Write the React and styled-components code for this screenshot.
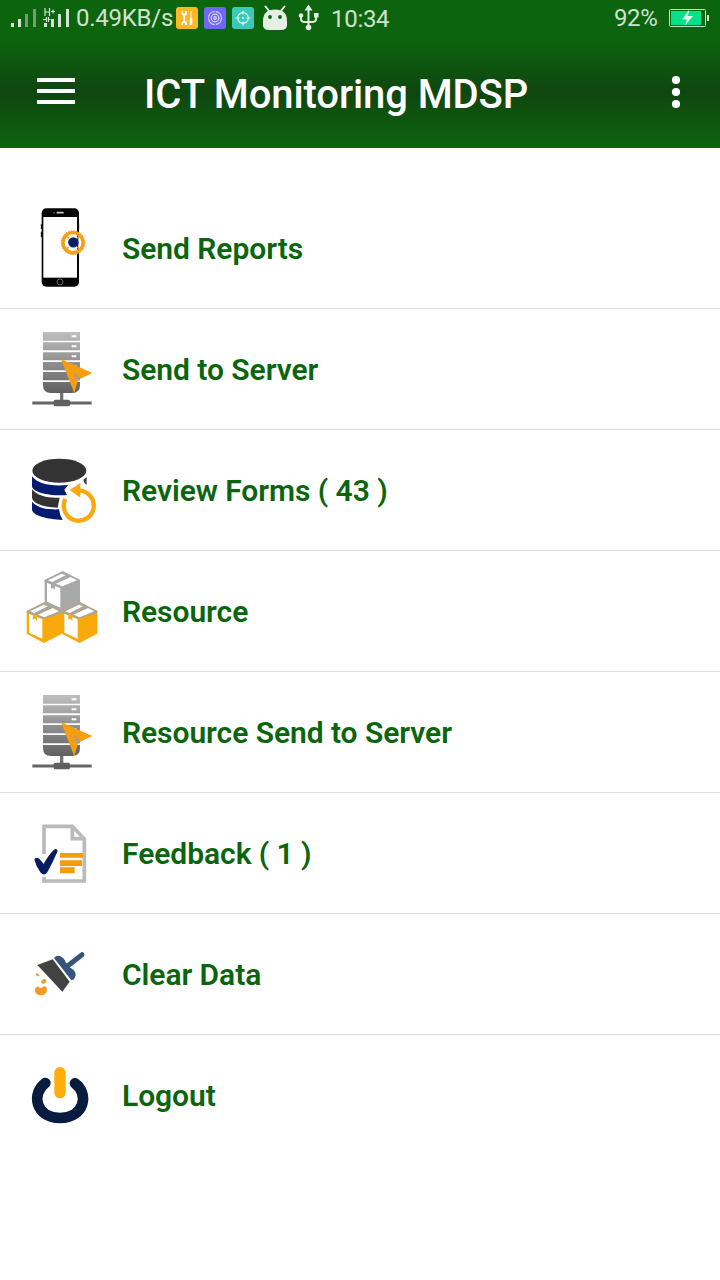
import React from 'react';
import styled, { createGlobalStyle } from 'styled-components';

const GlobalStyle = createGlobalStyle`
  * { box-sizing: border-box; }
  body { margin: 0; background: #fff; font-family: Roboto, sans-serif; }
`;

const Screen = styled.div`
  width: 720px;
  height: 1280px;
  background: #fff;
  overflow: hidden;
`;

const StatusBar = styled.div`
  height: 36px;
  padding: 0 10px;
  display: flex;
  align-items: center;
  background: #0c650e;
  color: #cfe2cf;
`;

const StatusText = styled.span`
  flex: none;
  width: ${(p) => p.$w}px;
  margin-left: ${(p) => p.$left || 0}px;
  padding-top: ${(p) => p.$drop || 0}px;
  font-size: 24px;
  line-height: 36px;
  height: 36px;
  letter-spacing: ${(p) => p.$track || 0}px;
  white-space: nowrap;
`;

const StatusIcon = styled.svg`
  display: block;
  flex: none;
  height: 36px;
  width: ${(p) => p.$w}px;
`;

const StatusGroup = styled.div`
  display: flex;
  align-items: center;
  gap: ${(p) => p.$gap || 0}px;
  margin-left: ${(p) => (p.$end ? 'auto' : 0)};
`;

const Header = styled.header`
  height: 112px;
  padding: 0 37px;
  display: flex;
  align-items: center;
  background: linear-gradient(#0c650e, #0f4610 50%, #0c650e);
  color: #fff;
`;

const Title = styled.h1`
  flex: 1;
  margin: 6px 0 0 69px;
  font-size: 40px;
  font-weight: 500;
  line-height: 48px;
  letter-spacing: -0.1px;
  white-space: nowrap;
`;

const IconButton = styled.button`
  border: 0;
  padding: 0;
  background: none;
  height: 44px;
  width: ${(p) => p.$w}px;
  svg { display: block; }
`;

const Menu = styled.ul`
  list-style: none;
  margin: 0;
  padding: 40px 0 0;
`;

const MenuItem = styled.li`
  height: 121px;
  padding: 0 22px;
  display: flex;
  align-items: center;
  gap: 20px;
  border-bottom: 1px solid #dedede;
  &:last-child { border-bottom-color: transparent; }
`;

const MenuIcon = styled.svg`
  display: block;
  flex: none;
  width: 80px;
  height: 100px;
`;

const Label = styled.span`
  padding-top: 1px;
  color: #0b650d;
  font-size: 30px;
  font-weight: 600;
  line-height: 36px;
  letter-spacing: -0.05px;
  white-space: nowrap;
`;

const PhoneIcon = () => (
  <MenuIcon viewBox="6 9 240 300">
    <rect x="65" y="40" width="112" height="235" rx="14" fill="#050505" />
    <rect x="70" y="66" width="101" height="182" fill="#fff" />
    <path d="M64.500 88v14M64.500 110v16M175.500 86v18" stroke="#111" strokeWidth="4" />
    <path d="M112 53h17" stroke="#c5c5c5" strokeWidth="5" strokeLinecap="round" />
    <circle cx="102" cy="53" r="2" fill="#888" />
    <circle cx="120" cy="261" r="9" fill="none" stroke="#666" strokeWidth="3" />
    <circle cx="159" cy="143" r="28" fill="#fff" />
    <path d="M173 118v50" stroke="#222" strokeWidth="4" />
    <circle cx="159" cy="143" r="30" fill="none" stroke="#f5a11c" strokeWidth="10" />
    <circle cx="159" cy="143" r="35" fill="none" stroke="#f5a11c" strokeWidth="4" strokeDasharray="4.300 3.200" />
    <path d="M147 130l-8-8M172 130l8-8M146 156l-7 7M172 156l8 8" stroke="#f5a11c" strokeWidth="5" />
    <circle cx="160" cy="142" r="15.500" fill="#0b1f66" />
  </MenuIcon>
);

const ServerIcon = () => (
  <MenuIcon viewBox="6 -3 240 300">
    <defs>
      <linearGradient id="rack" x1="0" y1="36" x2="0" y2="220" gradientUnits="userSpaceOnUse">
        <stop offset="0" stopColor="#bfbfbf" />
        <stop offset="1" stopColor="#606060" />
      </linearGradient>
    </defs>
    <path
      fill="url(#rack)"
      d="M69 36h111v26H69zM69 67h111v24H69zM69 97h111v24H69zM69 126h111v25H69zM69 156h111v25H69zM69 186h111v10q0 23-24 23H93q-24 0-24-23z"
    />
    <path d="M155 49h14M155 79h14M155 109h14M155 139h14" stroke="#fff" strokeWidth="6" />
    <path d="M125 219v22" stroke="#727272" strokeWidth="10" />
    <path d="M37 249h178" stroke="#666" strokeWidth="9" />
    <rect x="101" y="239" width="49" height="20" rx="5" fill="#606060" />
    <path d="M123 117L217 159L181 176L162 159L173 183L163 220Z" fill="#f59e11" />
    <path d="M161 158l20 18-8 8z" fill="#a3a3a3" />
  </MenuIcon>
);

const DatabaseIcon = () => (
  <MenuIcon viewBox="6 -15 240 300">
    <ellipse cx="118" cy="77" rx="81" ry="36" fill="#333" />
    <path d="M36 94C55 119 94 124 145 120L133 134L141 150C98 154 36 144 36 123Z" fill="#041b70" />
    <path d="M36 133C55 154 85 160 119 158L113 188C70 187 36 175 36 157Z" fill="#333" />
    <path d="M36 170C55 191 86 194 117 193Q119 211 128 225C82 223 36 212 36 193Z" fill="#041b70" />
    <path d="M190 104l10-8v23q-8-3-10-15z" fill="#444" />
    <path d="M136 162A45 45 0 1 0 176 137" fill="none" stroke="#faa80c" strokeWidth="13" />
    <path d="M149 135L181 114V158Z" fill="#faa80c" />
  </MenuIcon>
);

const Crate = ({ x, y, side, top }) => (
  <g transform={`translate(${x} ${y})`}>
    <path d="M0 26L54 0L106 26V94L52 122L0 94Z" fill={side} />
    <path d="M0 31V26L54 0L106 26V31L52 49Z" fill={top} />
    <path d="M7 34L47 51V109L7 91Z" fill="#fff" />
    <path d="M10 27L51 7L63 12L23 32ZM34 37L78 17L97 27L53 45Z" fill="#fff" />
    <path d="M19 34L31 39V56L25 49L19 52Z" fill={side} />
  </g>
);

const CratesIcon = () => (
  <MenuIcon viewBox="21 3 240 300">
    <Crate x={89} y={34} side="#a8a8a8" top="#a8a8a8" />
    <Crate x={35} y={127} side="#f9a90b" top="#aaa59a" />
    <Crate x={141} y={127} side="#f9a90b" top="#aaa59a" />
  </MenuIcon>
);

const FeedbackIcon = () => (
  <MenuIcon viewBox="6 -21 240 300">
    <path d="M72 132V49H157L193 87V213H72V200" fill="none" stroke="#bababa" strokeWidth="11" />
    <path d="M157 50V86H192" fill="none" stroke="#bababa" strokeWidth="11" />
    <path d="M120 129h69v14h-69zM120 151h66v17h-66zM120 172h44v18h-44z" fill="#f49b10" />
    <path d="M43 148q4-9 15-2l13 16q14-27 31-43q8-5 11 4q-14 33-31 64q-10 13-21 0q-14-20-18-39z" fill="#071b63" />
  </MenuIcon>
);

const BrushIcon = () => (
  <MenuIcon viewBox="6 -33 240 300">
    <path d="M138 97L186 59" stroke="#36557b" strokeWidth="15" strokeLinecap="round" />
    <path d="M102 69Q108 61 120 63Q133 69 137 82L151 98Q164 104 167 116Q167 134 154 136Z" fill="#36557b" />
    <path d="M52 90L98 73L149 140L127 170Z" fill="#424242" />
    <path d="M47 115q9-2 11 8q-9 4-11-8zM64 138q8-10 15-4q-1 14-12 12q-5-3-3-8zM45 162q6-12 12-5q6 5 11-1q9-6 13 5q0 20-20 20q-17-1-16-19z" fill="#f39a24" />
  </MenuIcon>
);

const PowerIcon = () => (
  <MenuIcon viewBox="6 -15 240 300">
    <path d="M76 99C34 130 45 203 120 204C195 203 207 130 165 100" fill="none" stroke="#071c3e" strokeWidth="32" strokeLinecap="round" />
    <path d="M120 68V128" stroke="#ffad08" strokeWidth="34" strokeLinecap="round" />
  </MenuIcon>
);

const items = [
  { label: 'Send Reports', Icon: PhoneIcon },
  { label: 'Send to Server', Icon: ServerIcon },
  { label: 'Review Forms ( 43 )', Icon: DatabaseIcon },
  { label: 'Resource', Icon: CratesIcon },
  { label: 'Resource Send to Server', Icon: ServerIcon },
  { label: 'Feedback ( 1 )', Icon: FeedbackIcon },
  { label: 'Clear Data', Icon: BrushIcon },
  { label: 'Logout', Icon: PowerIcon },
];

const SignalIcons = () => (
  <StatusIcon $w={62} viewBox="10 0 62 36">
    <path d="M11 23h3v4h-3zM18 19h3v8h-3z" fill="#d5e5d5" />
    <path d="M25 14h3v13h-3zM33 9h3v18h-3z" fill="#6da26e" />
    <path d="M44 23h3v4h-3zM51 19h3v8h-3zM58 14h3v13h-3zM66 9h3v18h-3z" fill="#d5e5d5" />
    <path d="M45 8v8M49.500 8v8M45 12h4.500M51 11.500h4M53 9.500v4M43 19.500h3.500M46.500 17v5M48.500 17v5M48.500 19.500h2" stroke="#d5e5d5" strokeWidth="1.200" />
  </StatusIcon>
);

const AppIcons = () => (
  <StatusIcon $w={146} viewBox="175 0 146 36">
    <rect x="176" y="7" width="22" height="22" rx="3" fill="#ffb820" />
    <path d="M181.500 11v3l2 2v5l-2 1v3h1.500v-2h2v2h2v-3l-2-1v-5l2-2v-3h-2v2.500h-2V11z" fill="#fff" />
    <path d="M191 11v7" stroke="#ffe3a3" strokeWidth="1.500" />
    <path d="M191 18v7" stroke="#fff" strokeWidth="2.500" />
    <rect x="204" y="7" width="22" height="22" rx="3" fill="#7166f9" />
    <g fill="none" stroke="#dedbff" strokeWidth="1.200">
      <circle cx="215" cy="18" r="6.500" strokeDasharray="9 1.200" />
      <circle cx="215" cy="18" r="3.800" />
      <circle cx="215" cy="18" r="1.300" />
    </g>
    <rect x="232" y="7" width="22" height="22" rx="3" fill="#3bcab7" />
    <g fill="none" stroke="#ddf8f3" strokeWidth="1.200">
      <circle cx="243" cy="18" r="5.300" />
      <path d="M243 10.500v4M243 21.500v4M235.500 18h4M246.500 18h4" />
    </g>
    <circle cx="243" cy="18" r="1" fill="#fff" />
    <path d="M265.500 6.500l4 5M284.500 6.500l-4 5" stroke="#e5efe5" strokeWidth="2" strokeLinecap="round" />
    <path d="M263 21q0-11.500 12-11.500t12 11.500v4q0 5-6 5h-12q-6 0-6-5z" fill="#e5efe5" />
    <circle cx="270" cy="17" r="1.900" fill="#0c650e" />
    <circle cx="280" cy="17" r="1.900" fill="#0c650e" />
    <path d="M308.500 9v18M301 16v3q0 3 4 3h7q4 0 4-3v-4" fill="none" stroke="#e5efe5" strokeWidth="2" />
    <path d="M308.500 4.500l4 6h-8z" fill="#e5efe5" />
    <circle cx="301" cy="15.500" r="2.300" fill="#e5efe5" />
    <rect x="314" y="13" width="4.500" height="4.500" fill="#e5efe5" />
    <circle cx="308.500" cy="27.500" r="2.800" fill="#e5efe5" />
  </StatusIcon>
);

const BatteryIcon = () => (
  <StatusIcon $w={41} viewBox="669 0 41 36">
    <rect x="669.500" y="9.500" width="36" height="17" rx="1" fill="none" stroke="#b5e6bd" />
    <rect x="671" y="11" width="30" height="14" fill="#00e18a" />
    <path d="M707 15h2v6h-2z" fill="#d5e5d5" />
    <path d="M688.500 10.500L682 19.500h5l-2 6 8-9.500h-5.500l2-5z" fill="#e3f7e9" />
  </StatusIcon>
);

export default function App() {
  return (
    <Screen>
      <GlobalStyle />
      <StatusBar>
        <StatusGroup>
          <SignalIcons />
          <StatusText $w={99} $left={4} $track={-0.25}>0.49KB/s</StatusText>
          <AppIcons />
          <StatusText $w={60} $left={10} $drop={1} $track={-0.3}>10:34</StatusText>
        </StatusGroup>
        <StatusGroup $end $gap={12}>
          <StatusText $w={43} $track={-0.4}>92%</StatusText>
          <BatteryIcon />
        </StatusGroup>
      </StatusBar>
      <Header>
        <IconButton $w={38} aria-label="Menu">
          <svg width="38" height="44" viewBox="0 0 38 44">
            <path d="M0 8h38v4H0zM0 19h38v4H0zM0 30h38v4H0z" fill="#fff" />
          </svg>
        </IconButton>
        <Title>ICT Monitoring MDSP</Title>
        <IconButton $w={14} aria-label="More options">
          <svg width="14" height="44" viewBox="0 0 14 44">
            <g fill="#fff">
              <circle cx="7" cy="10" r="4.100" />
              <circle cx="7" cy="22" r="4.100" />
              <circle cx="7" cy="34" r="4.100" />
            </g>
          </svg>
        </IconButton>
      </Header>
      <Menu>
        {items.map(({ label, Icon }) => (
          <MenuItem key={label}>
            <Icon />
            <Label>{label}</Label>
          </MenuItem>
        ))}
      </Menu>
    </Screen>
  );
}
